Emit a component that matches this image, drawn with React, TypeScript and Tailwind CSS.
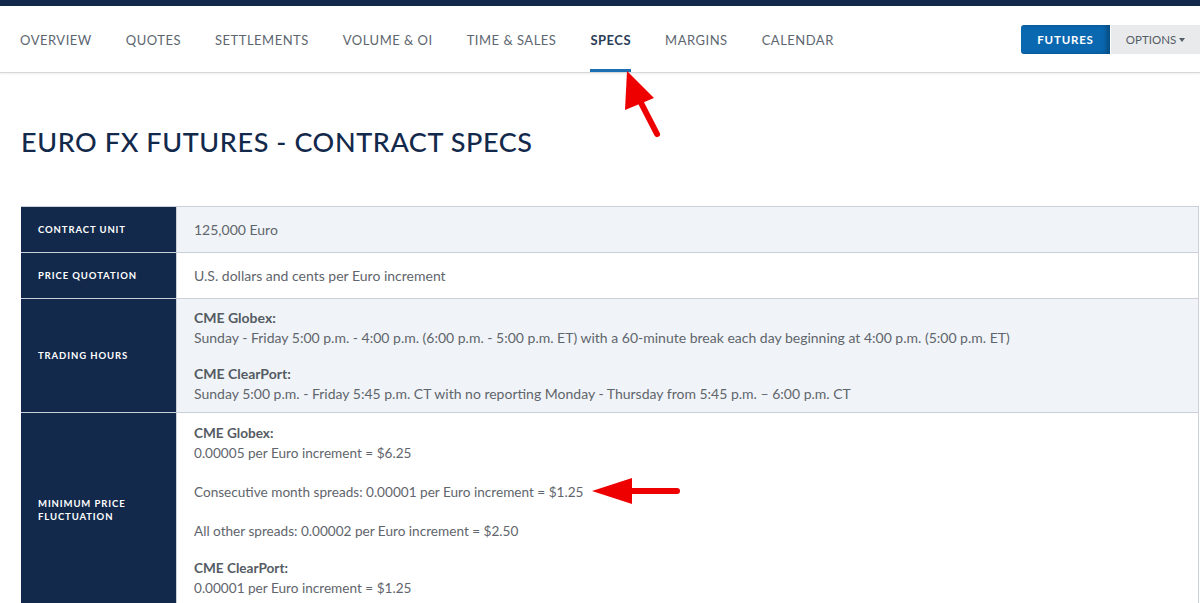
import React from "react";

const navItems = [
  "OVERVIEW",
  "QUOTES",
  "SETTLEMENTS",
  "VOLUME & OI",
  "TIME & SALES",
  "SPECS",
  "MARGINS",
  "CALENDAR",
];

function Label({ children }: { children: React.ReactNode }) {
  return (
    <div className="flex w-[156px] shrink-0 items-center border-r border-[#c9d0d8] bg-[#13294b] px-[17px] text-[9.5px] font-bold uppercase leading-[13px] tracking-[0.9px] text-white">
      {children}
    </div>
  );
}

function Sub({ children }: { children: React.ReactNode }) {
  return <p className="font-bold text-[#555b63]">{children}</p>;
}

export default function App() {
  return (
    <div
      className="relative min-h-[603px] w-[1200px] overflow-hidden bg-white"
      style={{ fontFamily: "Lato, 'Open Sans', sans-serif" }}
    >
      <div className="h-[6px] bg-[#13294b]" />
      <nav className="flex h-[67px] items-start border-b border-[#d6d8db] pl-[20px] shadow-[0_1px_2px_rgba(0,0,0,0.08)]">
        <ul className="mt-[24px] flex gap-[34px]">
          {navItems.map((item) => (
            <li
              key={item}
              className={
                item === "SPECS"
                  ? "relative text-[13px] leading-[20px] font-bold tracking-[0.5px] text-[#2c3e57]"
                  : "relative text-[13px] leading-[20px] tracking-[0.5px] text-[#5d6670]"
              }
            >
              {item}
              {item === "SPECS" && (
                <span className="absolute left-0 right-0 top-[39px] h-[3px] bg-[#1c6fb3]" />
              )}
            </li>
          ))}
        </ul>
        <div className="ml-auto mt-[19px] flex h-[29px]">
          <button className="w-[89px] rounded-l-[3px] bg-[#0a68b1] text-[11.5px] font-bold tracking-[0.8px] text-white shadow-[inset_-4px_0_4px_rgba(0,0,0,0.25)]">
            FUTURES
          </button>
          <button className="ml-[1px] flex w-[89px] items-center justify-center gap-[3px] bg-[#e9eaec] text-[11.5px] text-[#545c66]">
            OPTIONS
            <span className="mt-[1px] border-x-[3.5px] border-t-[4px] border-x-transparent border-t-[#545c66]" />
          </button>
        </div>
      </nav>

      <h1 className="ml-[21px] mt-[49px] text-[27px] font-medium tracking-[0.6px] text-[#13294b]">
        EURO FX FUTURES - CONTRACT SPECS
      </h1>

      <div className="ml-[21px] mr-[1px] mt-[43px] border-t border-r border-[#c9d0d8] text-[14px] text-[#5f656c]">
        <div className="flex h-[46px] border-b border-[#c9d0d8]">
          <Label>Contract Unit</Label>
          <div className="flex flex-1 items-center bg-[#f0f4f8] px-[17px]">
            125,000 Euro
          </div>
        </div>
        <div className="flex h-[46px] border-b border-[#c9d0d8]">
          <Label>Price Quotation</Label>
          <div className="flex flex-1 items-center bg-white px-[17px]">
            U.S. dollars and cents per Euro increment
          </div>
        </div>
        <div className="flex border-b border-[#c9d0d8]">
          <Label>Trading Hours</Label>
          <div className="flex flex-1 flex-col gap-[16px] bg-[#f0f4f8] px-[17px] pb-[8px] pt-[9px] leading-[20px]">
            <div>
              <Sub>CME Globex:</Sub>
              <p>
                Sunday - Friday 5:00 p.m. - 4:00 p.m. (6:00 p.m. - 5:00 p.m. ET)
                with a 60-minute break each day beginning at 4:00 p.m. (5:00 p.m. ET)
              </p>
            </div>
            <div>
              <Sub>CME ClearPort:</Sub>
              <p>
                Sunday 5:00 p.m. - Friday 5:45 p.m. CT with no reporting Monday -
                Thursday from 5:45 p.m. – 6:00 p.m. CT
              </p>
            </div>
          </div>
        </div>
        <div className="flex">
          <Label>Minimum Price Fluctuation</Label>
          <div className="flex flex-1 flex-col gap-[19px] bg-white px-[17px] pb-[9px] pt-[10px] text-[13.6px] leading-[20px]">
            <div>
              <Sub>CME Globex:</Sub>
              <p>0.00005 per Euro increment = $6.25</p>
            </div>
            <p>Consecutive month spreads: 0.00001 per Euro increment = $1.25</p>
            <p>All other spreads: 0.00002 per Euro increment = $2.50</p>
            <div className="-mt-[2px]">
              <Sub>CME ClearPort:</Sub>
              <p>0.00001 per Euro increment = $1.25</p>
            </div>
          </div>
        </div>
      </div>

      <svg
        className="pointer-events-none absolute left-0 top-0"
        width="1200"
        height="603"
      >
        <line x1="657" y1="134" x2="638" y2="97" stroke="#ee0000" strokeWidth="6" strokeLinecap="round" />
        <polygon points="627,71 654,98 625,110" fill="#ee0000" />
        <line x1="677" y1="491" x2="625" y2="491" stroke="#ee0000" strokeWidth="6" strokeLinecap="round" />
        <polygon points="592,491 632,478 632,504" fill="#ee0000" />
      </svg>
    </div>
  );
}
